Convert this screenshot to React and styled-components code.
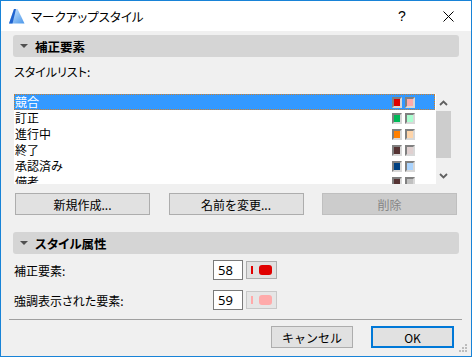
import React from 'react'
import styled, { createGlobalStyle } from 'styled-components'

const GlobalStyle = createGlobalStyle`
    html, body {
        margin: 0;
        padding: 0;
        background: #ffffff;
    }
    body {
        font-family: "Noto Sans CJK JP", "Noto Sans", sans-serif;
        font-feature-settings: "palt";
        font-size: 12px;
        color: #000;
    }
`

const Window = styled.div`
    position: relative;
    width: 472px;
    height: 357px;
    box-sizing: border-box;
    border: 1px solid #1883d7;
    background: #f0f0f0;
    display: flex;
    flex-direction: column;
`

const TitleBar = styled.div`
    height: 30px;
    background: #ffffff;
    display: flex;
    align-items: center;
    padding-left: 8px;
`

const TitleText = styled.div`
    margin-left: 6px;
    font-size: 12.5px;
    flex: 1;
`

const TitleButton = styled.div`
    width: ${p => p.w}px;
    display: flex;
    justify-content: center;
    align-items: center;
    font-family: "Liberation Sans", sans-serif;
    font-size: 14px;
`

const Content = styled.div`
    display: flex;
    flex-direction: column;
    padding: 4px 12px 0 12px;
    flex: 1;
`

const SectionHeader = styled.div`
    height: 22px;
    border-radius: 3px;
    background: #d5d5d5;
    display: flex;
    align-items: center;
    padding-left: 7px;
    margin-top: ${p => p.top || 0}px;
    font-weight: bold;
    font-size: 12.5px;
    gap: 7px;
`

const Caret = styled.span`
    width: 0;
    height: 0;
    border-left: 4px solid transparent;
    border-right: 4px solid transparent;
    border-top: 4px solid #505050;
`

const FieldLabel = styled.div`
    margin-top: 5px;
    height: 20px;
    line-height: 20px;
    padding-left: 1px;
`

const ListBox = styled.div`
    margin: 12px 0 0 1px;
    width: 437px;
    height: 90px;
    display: flex;
`

const Rows = styled.div`
    flex: 1;
    background: #ffffff;
    overflow: hidden;
`

const Row = styled.div`
    height: 16px;
    box-sizing: border-box;
    display: flex;
    align-items: center;
    padding-left: 1px;
    width: 421px;
    background: ${p => (p.selected ? '#3399ff' : 'transparent')};
    color: ${p => (p.selected ? '#ffffff' : '#000')};
    outline: ${p => (p.selected ? '1px dotted #d0802a' : 'none')};
    outline-offset: -1px;
    line-height: 16px;
`

const Swatches = styled.div`
    margin-left: auto;
    margin-right: 20px;
    display: flex;
    gap: 3px;
`

const Swatch = styled.span`
    width: 10px;
    height: 11px;
    box-sizing: border-box;
    border: 2px solid;
    border-color: #808080 #d8d8d8 #d8d8d8 #808080;
    background: ${p => p.color};
`

const ScrollBar = styled.div`
    width: 15px;
    display: flex;
    flex-direction: column;
    background: #f0f0f0;
`

const ScrollArrow = styled.div`
    height: 17px;
    display: flex;
    align-items: center;
    justify-content: center;
`

const Thumb = styled.div`
    height: 47px;
    background: #cdcdcd;
`

const ButtonRow = styled.div`
    margin-top: 9px;
    padding: 0 2px;
    display: flex;
    justify-content: space-between;
`

const Button = styled.button`
    width: ${p => p.w || 135}px;
    height: 22px;
    box-sizing: border-box;
    font-family: inherit;
    font-size: 12px;
    padding: 0;
    background: ${p => (p.disabled ? '#cccccc' : '#e1e1e1')};
    color: ${p => (p.disabled ? '#858585' : '#000')};
    border: ${p => (p.primary ? '2px solid #0078d7' : p.disabled ? '1px solid #bfbfbf' : '1px solid #adadad')};
`

const PropRow = styled.div`
    display: flex;
    align-items: center;
    height: 20px;
    margin-top: ${p => p.top}px;
`

const PropLabel = styled.div`
    width: 199px;
    padding-left: 1px;
`

const NumberBox = styled.div`
    width: 30px;
    height: 20px;
    box-sizing: border-box;
    border: 1px solid #7a7a7a;
    background: #ffffff;
    font-family: "Noto Sans", sans-serif;
    font-size: 13px;
    line-height: 18px;
    padding-left: 4px;
`

const ColorButton = styled.div`
    margin-left: 3px;
    width: 31px;
    height: 18px;
    box-sizing: border-box;
    border: 1px solid ${p => (p.dim ? '#c8c8c8' : '#adadad')};
    background: ${p => (p.dim ? '#e6e6e6' : '#e1e1e1')};
    display: flex;
    align-items: center;
    padding-left: 4px;
    gap: 6px;
`

const LineSample = styled.span`
    width: 2px;
    height: 8px;
    background: ${p => p.color};
`

const FillSample = styled.span`
    width: 13px;
    height: 10px;
    border-radius: 3px;
    background: ${p => p.color};
`

const Separator = styled.div`
    margin: 9px -3px 0 -4px;
    height: 1px;
    background: #a0a0a0;
`

const Footer = styled.div`
    margin-top: 6px;
    padding-right: 5px;
    display: flex;
    justify-content: flex-end;
    gap: 18px;
`

const Grip = styled.svg`
    position: absolute;
    right: 3px;
    bottom: 3px;
`

const styles = [
    { name: '競合', a: '#e00000', b: '#ffaaaa' },
    { name: '訂正', a: '#00b858', b: '#aaffd0' },
    { name: '進行中', a: '#ff8000', b: '#ffd5aa' },
    { name: '終了', a: '#553333', b: '#e0d0d0' },
    { name: '承認済み', a: '#004080', b: '#aad4ff' },
    { name: '備考', a: '#553333', b: '#c0c0c0' },
]

const AppIcon = () => (
    <svg width="16" height="15" viewBox="0 0 16 15">
        <defs>
            <linearGradient id="sail" x1="0" y1="0" x2="1" y2="1">
                <stop offset="0" stopColor="#d6ebff" />
                <stop offset="1" stopColor="#4a97ea" />
            </linearGradient>
        </defs>
        <path d="M5 0 L8.5 0 Q12 7 15.5 14.5 L0 14.5 Z" fill="url(#sail)" />
        <path d="M5 0 L7 0 L3.5 14.5 L0 14.5 Z" fill="#1f63cf" />
    </svg>
)

const Chevron = ({ up }) => (
    <svg width="9" height="6" viewBox="0 0 9 6">
        <polyline
            points={up ? '1,5 4.5,1.5 8,5' : '1,1 4.5,4.5 8,1'}
            fill="none"
            stroke="#606060"
            strokeWidth="1.8"
        />
    </svg>
)

const App = () => {
    return (
        <Window>
            <GlobalStyle />
            <TitleBar>
                <AppIcon />
                <TitleText>マークアップスタイル</TitleText>
                <TitleButton w={46}>?</TitleButton>
                <TitleButton w={46}>
                    <svg width="11" height="11" viewBox="0 0 11 11">
                        <path d="M0.5 0.5 L10.5 10.5 M10.5 0.5 L0.5 10.5" stroke="#000" strokeWidth="1" />
                    </svg>
                </TitleButton>
            </TitleBar>
            <Content>
                <SectionHeader>
                    <Caret />
                    補正要素
                </SectionHeader>
                <FieldLabel>スタイルリスト:</FieldLabel>
                <ListBox>
                    <Rows>
                        {styles.map((s, i) => (
                            <Row key={s.name} selected={i === 0}>
                                {s.name}
                                <Swatches>
                                    <Swatch color={s.a} />
                                    <Swatch color={s.b} />
                                </Swatches>
                            </Row>
                        ))}
                    </Rows>
                    <ScrollBar>
                        <ScrollArrow><Chevron up /></ScrollArrow>
                        <Thumb />
                        <div style={{ flex: 1 }} />
                        <ScrollArrow><Chevron /></ScrollArrow>
                    </ScrollBar>
                </ListBox>
                <ButtonRow>
                    <Button>新規作成...</Button>
                    <Button>名前を変更...</Button>
                    <Button disabled>削除</Button>
                </ButtonRow>
                <SectionHeader top={17}>
                    <Caret />
                    スタイル属性
                </SectionHeader>
                <PropRow top={6}>
                    <PropLabel>補正要素:</PropLabel>
                    <NumberBox>58</NumberBox>
                    <ColorButton>
                        <LineSample color="#e00000" />
                        <FillSample color="#e00000" />
                    </ColorButton>
                </PropRow>
                <PropRow top={10}>
                    <PropLabel>強調表示された要素:</PropLabel>
                    <NumberBox>59</NumberBox>
                    <ColorButton dim>
                        <LineSample color="#ffaaaa" />
                        <FillSample color="#ffaaaa" />
                    </ColorButton>
                </PropRow>
                <Separator />
                <Footer>
                    <Button w={82}>キャンセル</Button>
                    <Button w={83} primary>OK</Button>
                </Footer>
            </Content>
            <Grip width="9" height="9" viewBox="0 0 9 9">
                <rect x="6" y="0" width="2" height="2" fill="#bcbcbc" />
                <rect x="3" y="3" width="2" height="2" fill="#bcbcbc" />
                <rect x="6" y="3" width="2" height="2" fill="#bcbcbc" />
                <rect x="0" y="6" width="2" height="2" fill="#bcbcbc" />
                <rect x="3" y="6" width="2" height="2" fill="#bcbcbc" />
                <rect x="6" y="6" width="2" height="2" fill="#bcbcbc" />
            </Grip>
        </Window>
    )
}

export default App
